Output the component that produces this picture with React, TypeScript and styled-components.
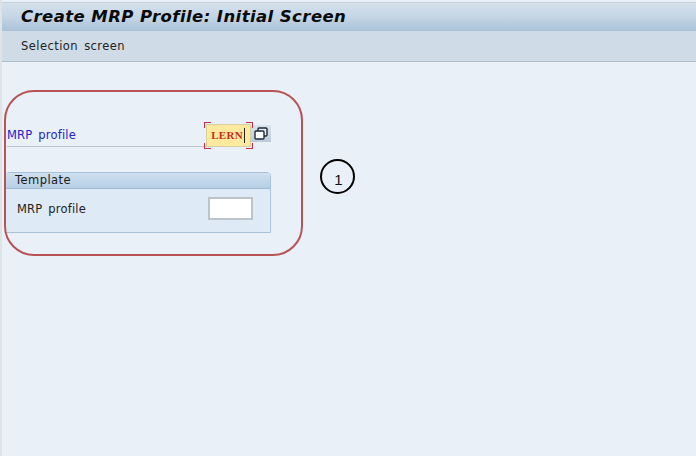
import React from 'react';
import styled, { createGlobalStyle } from 'styled-components';

const GlobalStyle = createGlobalStyle`
  html, body {
    margin: 0;
    padding: 0;
    background: #e9f0f7;
    font-family: "DejaVu Sans", Verdana, sans-serif;
    overflow: hidden;
  }
`;

const Screen = styled.div`
  position: relative;
  width: 696px;
  height: 456px;
  box-sizing: border-box;
  padding-top: 2px;
  background: #e9f0f7;
  border-left: 2px solid #dfe3e8;
  overflow: hidden;
`;

const TitleBar = styled.div`
  height: 29px;
  box-sizing: border-box;
  padding: 0 0 2px 19px;
  display: flex;
  align-items: center;
  background: linear-gradient(to bottom, #d5e1ec 0%, #c2d4e4 55%, #a9c1d7 100%);
  border-top: 1px solid #c5cfd9;
  color: #0a0a0a;
  font-size: 16.5px;
  letter-spacing: 0.42px;
  font-weight: bold;
  font-style: italic;
  white-space: nowrap;
`;

const Toolbar = styled.div`
  height: 31px;
  box-sizing: border-box;
  padding-left: 19px;
  display: flex;
  align-items: center;
  background: #cfdce7;
  border-bottom: 1px solid #b1bfcb;
  color: #222;
  font-size: 11.5px;
  letter-spacing: 0.45px;
  word-spacing: 2px;
`;

const Content = styled.div`
  padding: 62px 0 0 3px;
  display: flex;
  flex-direction: column;
  width: 266px;
`;

const ProfileRow = styled.div`
  display: flex;
  align-items: flex-start;
  height: 23px;
`;

const ProfileLabel = styled.div`
  width: 200px;
  height: 23px;
  margin-left: 2px;
  box-sizing: border-box;
  border-bottom: 1px solid #bcc3c9;
  color: #2222cc;
  font-size: 11.5px;
  line-height: 23px;
  letter-spacing: 0.2px;
  word-spacing: 2px;
`;

const ActiveField = styled.div`
  position: relative;
  width: 45px;
  height: 23px;
  box-sizing: border-box;
  border: 1px solid #d8cf9e;
  background: #ffe99f;
  color: #c0301c;
  font-family: "Liberation Serif", serif;
  font-size: 11px;
  font-weight: bold;
  letter-spacing: 0.3px;
  line-height: 21px;
  padding-left: 4px;
  display: flex;
`;

const Caret = styled.span`
  width: 1px;
  height: 15px;
  margin: 3px 0 0 1px;
  background: #222;
`;

const Corner = styled.span<{ $v: 'top' | 'bottom'; $h: 'left' | 'right' }>`
  position: absolute;
  width: 6px;
  height: 5px;
  ${(p) => p.$v}: -3px;
  ${(p) => p.$h}: -3px;
  border-${(p) => p.$v}: 1.5px solid #c0304a;
  border-${(p) => p.$h}: 1.5px solid #c0304a;
`;

const ValueHelp = styled.div`
  width: 20px;
  height: 17px;
  margin: 1px 0 0 0;
  background: linear-gradient(to bottom, #dbe4ec, #bccad8);
  display: flex;
  align-items: center;
  justify-content: center;
`;

const GroupBox = styled.div`
  margin-top: 25px;
  height: 61px;
  box-sizing: border-box;
  border: 1px solid #a9c2da;
  border-radius: 4px 4px 0 0;
  background: #deeaf5;
`;

const GroupHeader = styled.div`
  height: 15px;
  padding-left: 9px;
  background: linear-gradient(to bottom, #cfe0ef, #b6cfe6);
  border-bottom: 1px solid #a2bdd6;
  color: #1a1a1a;
  font-size: 11.5px;
  line-height: 15px;
  letter-spacing: 0.45px;
`;

const GroupRow = styled.div`
  display: flex;
  align-items: center;
  padding: 8px 0 0 11px;
`;

const GroupLabel = styled.div`
  width: 191px;
  color: #222;
  font-size: 11.5px;
  letter-spacing: 0.2px;
  word-spacing: 2px;
`;

const EmptyField = styled.div`
  width: 45px;
  height: 23px;
  box-sizing: border-box;
  border: 2px solid #bcc3c9;
  background: #fff;
`;

const Callout = styled.div`
  position: absolute;
  left: 2px;
  top: 90px;
  width: 299px;
  height: 166px;
  box-sizing: border-box;
  border: 2.5px solid #b85355;
  border-radius: 30px;
  pointer-events: none;
`;

const StepBadge = styled.div`
  position: absolute;
  left: 318px;
  top: 159px;
  width: 35px;
  height: 35px;
  box-sizing: border-box;
  border: 2px solid #000;
  border-radius: 50%;
  color: #111;
  font-family: "Liberation Sans", Arial, sans-serif;
  font-size: 15px;
  display: flex;
  align-items: center;
  justify-content: center;
  padding: 6px 0 0 2px;
`;

const CopyIcon = () => (
  <svg width="14" height="13" viewBox="0 0 14 13">
    <rect x="4" y="1" width="9" height="8" rx="1" fill="#e9eef3" stroke="#1c2a38" strokeWidth="1.4" />
    <rect x="1" y="4" width="9" height="8" rx="1" fill="#fff" stroke="#1c2a38" strokeWidth="1.4" />
  </svg>
);

const App = () => {
  return (
    <Screen>
      <GlobalStyle />
      <TitleBar>Create MRP Profile: Initial Screen</TitleBar>
      <Toolbar>Selection screen</Toolbar>
      <Content>
        <ProfileRow>
          <ProfileLabel>MRP profile</ProfileLabel>
          <ActiveField>
            LERN
            <Caret />
            <Corner $v="top" $h="left" />
            <Corner $v="top" $h="right" />
            <Corner $v="bottom" $h="left" />
            <Corner $v="bottom" $h="right" />
          </ActiveField>
          <ValueHelp>
            <CopyIcon />
          </ValueHelp>
        </ProfileRow>
        <GroupBox>
          <GroupHeader>Template</GroupHeader>
          <GroupRow>
            <GroupLabel>MRP profile</GroupLabel>
            <EmptyField />
          </GroupRow>
        </GroupBox>
      </Content>
      <Callout />
      <StepBadge>1</StepBadge>
    </Screen>
  );
};

export default App;
